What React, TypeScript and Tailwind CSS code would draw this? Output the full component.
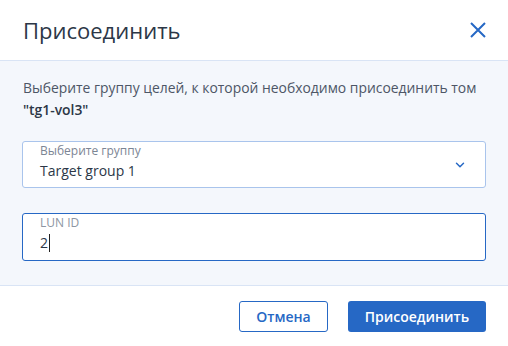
import { ChevronDown } from "lucide-react";

export default function App() {
  return (
    <div className="flex h-[346px] w-[508px] flex-col bg-white font-['Open_Sans',sans-serif]">
      <div className="flex h-[61px] shrink-0 items-center justify-between border-b border-[#d9e4f5] pl-[23px] pr-[22px]">
        <h1 className="text-[22px] text-[#2c3747]">Присоединить</h1>
        <button type="button" className="text-[#2668c5]" aria-label="Закрыть">
          <svg width="16" height="16" viewBox="0 0 16 16" fill="none" stroke="currentColor" strokeWidth="2">
            <path d="M1 1L15 15M15 1L1 15" />
          </svg>
        </button>
      </div>

      <div className="flex h-[225px] shrink-0 flex-col border-b border-[#d9e4f5] bg-[#f4f7fc] px-[22px] pt-[16px]">
        <p className="pl-px text-[13.9px] leading-[22px] text-[#4d5666]">
          Выберите группу целей, к которой необходимо присоединить том
          <br />
          <span className="font-semibold text-[#2c3747]">"tg1-vol3"</span>
        </p>

        <div className="mt-[20px] flex h-[47px] items-start rounded-[3px] border border-[#a9c4ec] bg-white pl-[17px] pr-[18px] pt-[2px]">
          <div className="flex flex-1 flex-col">
            <span className="text-[12px] leading-[14px] text-[#7c8594]">Выберите группу</span>
            <span className="mt-[3px] text-[14px] leading-[20px] text-[#2c3747]">Target group 1</span>
          </div>
          <ChevronDown className="mt-[14px] h-[14px] w-[14px] text-[#2668c5]" strokeWidth={2.5} />
        </div>

        <div className="mt-[25px] flex h-[48px] flex-col rounded-[3px] border border-[#2668c5] bg-white pl-[17px] pt-[2px]">
          <span className="text-[12px] leading-[14px] text-[#8d95a2]">LUN ID</span>
          <span className="mt-[3px] flex items-center text-[14px] leading-[20px] text-[#2c3747]">
            2<span className="ml-px inline-block h-[18px] w-px bg-[#222]" />
          </span>
        </div>
      </div>

      <div className="flex flex-1 items-center justify-end gap-[20px] pr-[22px]">
        <button
          type="button"
          className="h-[31px] w-[89px] rounded-[3px] border border-[#2668c5] bg-white text-[14px] font-semibold text-[#2668c5]"
        >
          Отмена
        </button>
        <button
          type="button"
          className="h-[31px] w-[138px] rounded-[3px] bg-[#2668c5] text-[14px] font-semibold text-white"
        >
          Присоединить
        </button>
      </div>
    </div>
  );
}
